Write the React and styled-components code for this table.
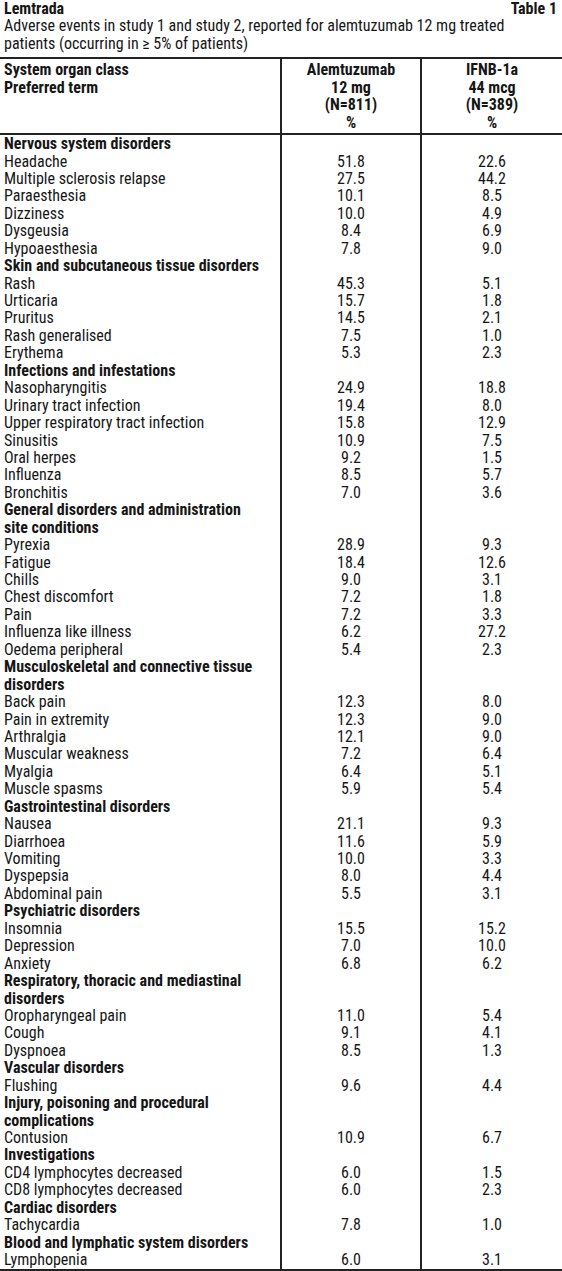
import React from "react";
import styled, { createGlobalStyle } from "styled-components";

const Global = createGlobalStyle`
  html, body { margin: 0; padding: 0; background: #fff; }
  body {
    font-family: Roboto, "DejaVu Sans Condensed", "Liberation Sans", sans-serif;
    font-stretch: 80%;
    color: #161616;
    font-size: 16px;
    line-height: 17.43px;
  }
`;

const Page = styled.div`
  width: 562px;
  display: flex;
  flex-direction: column;
`;

const Caption = styled.div`
  padding: 0 5px 0 4px;
  margin-bottom: 5px;
`;

const TitleRow = styled.div`
  display: flex;
  justify-content: space-between;
  font-weight: bold;
`;

const Subtitle = styled.div`
  white-space: nowrap;
`;

const Table = styled.table`
  width: 562px;
  border-collapse: collapse;
  table-layout: fixed;
  border-top: 2px solid #222;
  border-bottom: 2px solid #222;
`;

const Col = styled.col`
  width: ${(p) => p.$w}px;
`;

const HeadCell = styled.th`
  font-weight: bold;
  vertical-align: top;
  text-align: ${(p) => (p.$left ? "left" : "center")};
  padding: ${(p) => (p.$left ? "2px 0 2px 4px" : "2px 0")};
  border-bottom: 2px solid #222;
  border-left: ${(p) => (p.$left ? "none" : "2px solid #222")};
  line-height: 17.43px;
  white-space: nowrap;
`;

const Cell = styled.td`
  padding: ${(p) => (p.$label ? "0 0 0 4px" : "0")};
  text-align: ${(p) => (p.$label ? "left" : "center")};
  font-weight: ${(p) => (p.$bold ? "bold" : "normal")};
  border-left: ${(p) => (p.$label ? "none" : "2px solid #222")};
  height: 17.43px;
  line-height: 17.43px;
  white-space: nowrap;
  vertical-align: top;
`;

const data = [
  ["Nervous system disorders"],
  ["Headache", "51.8", "22.6"],
  ["Multiple sclerosis relapse", "27.5", "44.2"],
  ["Paraesthesia", "10.1", "8.5"],
  ["Dizziness", "10.0", "4.9"],
  ["Dysgeusia", "8.4", "6.9"],
  ["Hypoaesthesia", "7.8", "9.0"],
  ["Skin and subcutaneous tissue disorders"],
  ["Rash", "45.3", "5.1"],
  ["Urticaria", "15.7", "1.8"],
  ["Pruritus", "14.5", "2.1"],
  ["Rash generalised", "7.5", "1.0"],
  ["Erythema", "5.3", "2.3"],
  ["Infections and infestations"],
  ["Nasopharyngitis", "24.9", "18.8"],
  ["Urinary tract infection", "19.4", "8.0"],
  ["Upper respiratory tract infection", "15.8", "12.9"],
  ["Sinusitis", "10.9", "7.5"],
  ["Oral herpes", "9.2", "1.5"],
  ["Influenza", "8.5", "5.7"],
  ["Bronchitis", "7.0", "3.6"],
  ["General disorders and administration", "site conditions"],
  ["Pyrexia", "28.9", "9.3"],
  ["Fatigue", "18.4", "12.6"],
  ["Chills", "9.0", "3.1"],
  ["Chest discomfort", "7.2", "1.8"],
  ["Pain", "7.2", "3.3"],
  ["Influenza like illness", "6.2", "27.2"],
  ["Oedema peripheral", "5.4", "2.3"],
  ["Musculoskeletal and connective tissue", "disorders"],
  ["Back pain", "12.3", "8.0"],
  ["Pain in extremity", "12.3", "9.0"],
  ["Arthralgia", "12.1", "9.0"],
  ["Muscular weakness", "7.2", "6.4"],
  ["Myalgia", "6.4", "5.1"],
  ["Muscle spasms", "5.9", "5.4"],
  ["Gastrointestinal disorders"],
  ["Nausea", "21.1", "9.3"],
  ["Diarrhoea", "11.6", "5.9"],
  ["Vomiting", "10.0", "3.3"],
  ["Dyspepsia", "8.0", "4.4"],
  ["Abdominal pain", "5.5", "3.1"],
  ["Psychiatric disorders"],
  ["Insomnia", "15.5", "15.2"],
  ["Depression", "7.0", "10.0"],
  ["Anxiety", "6.8", "6.2"],
  ["Respiratory, thoracic and mediastinal", "disorders"],
  ["Oropharyngeal pain", "11.0", "5.4"],
  ["Cough", "9.1", "4.1"],
  ["Dyspnoea", "8.5", "1.3"],
  ["Vascular disorders"],
  ["Flushing", "9.6", "4.4"],
  ["Injury, poisoning and procedural", "complications"],
  ["Contusion", "10.9", "6.7"],
  ["Investigations"],
  ["CD4 lymphocytes decreased", "6.0", "1.5"],
  ["CD8 lymphocytes decreased", "6.0", "2.3"],
  ["Cardiac disorders"],
  ["Tachycardia", "7.8", "1.0"],
  ["Blood and lymphatic system disorders"],
  ["Lymphopenia", "6.0", "3.1"],
];

function Row({ row }) {
  const isCategory = row.length < 3;
  if (isCategory) {
    return (
      <tr>
        <Cell $label $bold>
          {row.map((line, i) => (
            <React.Fragment key={i}>
              {i > 0 && <br />}
              {line}
            </React.Fragment>
          ))}
        </Cell>
        <Cell />
        <Cell />
      </tr>
    );
  }
  return (
    <tr>
      <Cell $label>{row[0]}</Cell>
      <Cell>{row[1]}</Cell>
      <Cell>{row[2]}</Cell>
    </tr>
  );
}

export default function App() {
  return (
    <Page>
      <Global />
      <Caption>
        <TitleRow>
          <span>Lemtrada</span>
          <span>Table 1</span>
        </TitleRow>
        <Subtitle>Adverse events in study 1 and study 2, reported for alemtuzumab 12 mg treated</Subtitle>
        <Subtitle>patients (occurring in ≥ 5% of patients)</Subtitle>
      </Caption>
      <Table>
        <colgroup>
          <Col $w={281} />
          <Col $w={140} />
          <Col $w={141} />
        </colgroup>
        <thead>
          <tr>
            <HeadCell $left>
              System organ class
              <br />
              Preferred term
            </HeadCell>
            <HeadCell>
              Alemtuzumab
              <br />
              12 mg
              <br />
              (N=811)
              <br />%
            </HeadCell>
            <HeadCell>
              IFNB-1a
              <br />
              44 mcg
              <br />
              (N=389)
              <br />%
            </HeadCell>
          </tr>
        </thead>
        <tbody>
          {data.map((row, i) => (
            <Row key={i} row={row} />
          ))}
        </tbody>
      </Table>
    </Page>
  );
}
